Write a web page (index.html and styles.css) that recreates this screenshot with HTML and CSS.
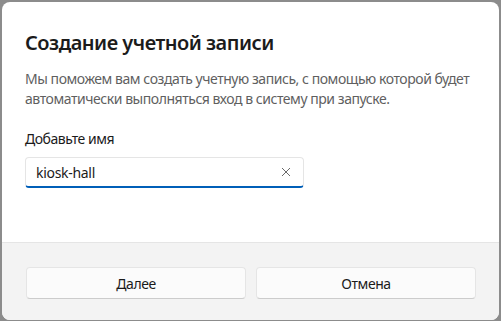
FILE: index.html
```html
<!DOCTYPE html>
<html lang="ru">
<head>
<meta charset="utf-8">
<link rel="stylesheet" href="styles.css">
</head>
<body>
<div class="dialog">
  <div class="content">
    <h1 class="title">Создание учетной записи</h1>
    <p class="desc">Мы поможем вам создать учетную запись, с помощью которой будет автоматически выполняться вход в систему при запуске.</p>
    <label class="label">Добавьте имя</label>
    <div class="input">
      <span class="value">kiosk-hall</span>
      <svg class="clear" width="10" height="10" viewBox="0 0 10 10"><path d="M1 1L9 9M9 1L1 9" stroke="#6a6a6a" stroke-width="1" fill="none"/></svg>
    </div>
  </div>
  <div class="footer">
    <button class="btn">Далее</button>
    <button class="btn">Отмена</button>
  </div>
</div>
</body>
</html>
```
FILE: styles.css
```css
html, body {
  margin: 0;
  padding: 0;
  background: #8c8c8c;
  width: 501px;
  height: 321px;
  overflow: hidden;
}
body {
  font-family: "Noto Sans", "Open Sans", sans-serif;
  box-sizing: border-box;
  padding: 2px 2px 1px 2px;
}
.dialog {
  height: 318px;
  border-radius: 8px;
  overflow: hidden;
  background: #ffffff;
  display: flex;
  flex-direction: column;
}
.content {
  flex: 1;
  padding: 27px 23px 0 23px;
}
.title {
  margin: 0;
  font-size: 20px;
  line-height: 28px;
  font-weight: 600;
  letter-spacing: -0.5px;
  color: #1b1b1b;
}
.desc {
  margin: 12px 0 0 0;
  font-size: 14px;
  line-height: 20px;
  letter-spacing: -0.45px;
  color: #5f5f5f;
}
.label {
  display: block;
  margin-top: 20px;
  font-size: 14px;
  line-height: 20px;
  letter-spacing: -0.45px;
  color: #1b1b1b;
}
.input {
  margin-top: 8px;
  width: 279px;
  height: 31px;
  box-sizing: border-box;
  border: 1px solid #e5e5e5;
  border-bottom: 2px solid #005fb8;
  border-radius: 4px;
  display: flex;
  align-items: center;
  justify-content: space-between;
  padding: 0 12px 0 10px;
}
.value {
  font-size: 14px;
  letter-spacing: -0.3px;
  color: #1b1b1b;
}
.clear {
  display: block;
}
.footer {
  height: 78px;
  box-sizing: border-box;
  background: #f3f3f3;
  border-top: 1px solid #e5e5e5;
  padding: 24px 23px 0 24px;
  display: flex;
  gap: 10px;
}
.btn {
  flex: 1;
  height: 32px;
  background: #fbfbfb;
  border: 1px solid #e5e5e5;
  border-bottom-color: #cccccc;
  border-radius: 4px;
  font-family: "Noto Sans", "Open Sans", sans-serif;
  font-size: 14px;
  letter-spacing: -0.45px;
  color: #1b1b1b;
  padding: 0;
}
```
